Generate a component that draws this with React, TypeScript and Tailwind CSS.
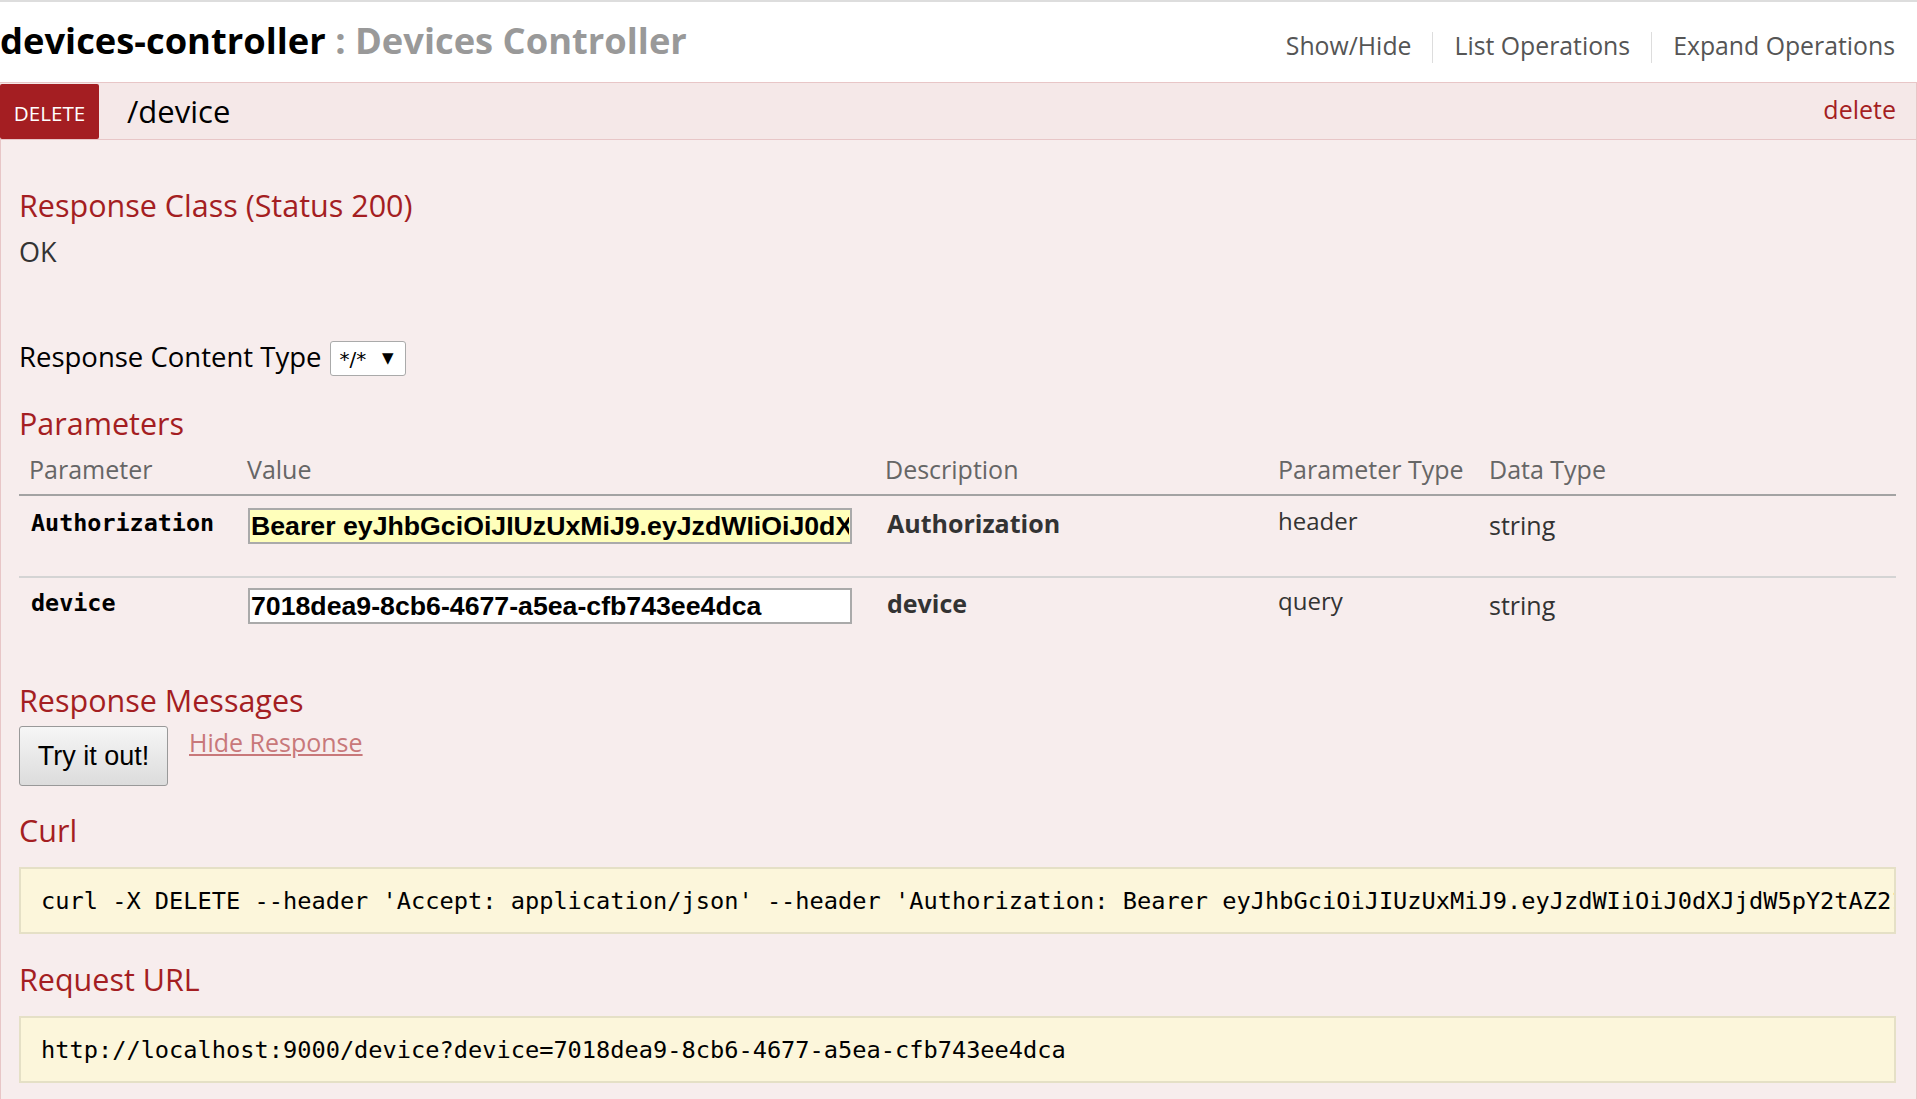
import React from "react";

const TOKEN =
  "Bearer eyJhbGciOiJIUzUxMiJ9.eyJzdWIiOiJ0dXJjdW5pY2tAZ21haWwuY29tIiwiZXhwIjoxNTI2MDAwMDAwfQ.Xk3pQm9vR2c0aWxwZ1hDZkRhT0p4b1d6";
const DEVICE = "7018dea9-8cb6-4677-a5ea-cfb743ee4dca";
const CURL = `curl -X DELETE --header 'Accept: application/json' --header 'Authorization: ${TOKEN}' 'http://localhost:9000/device?device=${DEVICE}'`;
const URL = `http://localhost:9000/device?device=${DEVICE}`;

const cols = "grid grid-cols-[218px_638px_393px_211px_1fr]";

function ParamRow({
  name,
  value,
  required,
  desc,
  ptype,
  border,
}: {
  name: string;
  value: string;
  required?: boolean;
  desc: string;
  ptype: string;
  border?: boolean;
}) {
  return (
    <div className={`${cols} h-[82px] ${border ? "border-b-2 border-[#d4d4d4]" : ""}`}>
      <div className="pl-[12px] pt-[12px] font-['DejaVu_Sans_Mono',monospace] text-[23.4px] font-bold leading-[30px] text-black">
        {name}
      </div>
      <div className="pl-[11px] pt-[12px]">
        <input
          readOnly
          value={value}
          className={`block h-[36px] w-[604px] border-2 border-[#aaaaaa] px-[1px] font-['Liberation_Sans',Arial,sans-serif] text-[26.7px] font-bold text-black outline-none ${
            required ? "bg-[#ffffbb]" : "bg-white"
          }`}
        />
      </div>
      <div className="pl-[12px] pt-[10px] text-[25px] font-bold leading-[34px] text-[#333333]">{desc}</div>
      <div className="pl-[10px] pt-[8px] text-[24px] leading-[34px] text-[#333333]">{ptype}</div>
      <div className="pl-[10px] pt-[12px] text-[25px] leading-[34px] text-[#333333]">string</div>
    </div>
  );
}

export default function App() {
  return (
    <div className="min-h-screen w-full border-t-2 border-[#dddddd] bg-white font-['Open_Sans',sans-serif]">
      {/* resource header */}
      <div className="flex h-[80px] items-start justify-between">
        <h2 className="whitespace-nowrap text-[36.3px] font-bold leading-[77px] text-black">
          devices-controller <span className="text-[#999999]">: Devices Controller</span>
        </h2>
        <div className="flex items-start gap-[21px] pr-[22px] pt-[26px] text-[24.8px] leading-[34px] text-[#555555]">
          <span>Show/Hide</span>
          <span className="mt-[4px] h-[31px] w-px bg-[#dddddd]" />
          <span>List Operations</span>
          <span className="mt-[4px] h-[31px] w-px bg-[#dddddd]" />
          <span>Expand Operations</span>
        </div>
      </div>

      {/* operation heading */}
      <div className="flex h-[58px] items-start border-y border-r border-[#e8c6c7] bg-[#f5e8e8]">
        <span className="mt-[1px] h-[55px] w-[99px] rounded-[2px] bg-[#a41e22] text-center text-[20.6px] leading-[58px] text-white">
          DELETE
        </span>
        <span className="ml-[28px] text-[31px] leading-[56px] text-black">/device</span>
        <span className="ml-auto pr-[20px] text-[25px] leading-[53px] text-[#a41e22]">delete</span>
      </div>

      {/* operation content */}
      <div className="border-x border-b border-[#e8c6c7] bg-[#f7eded] pb-[20px] pl-[18px] pr-[20px] pt-[45px]">
        <h4 className="text-[30.5px] leading-[41px] text-[#a41e22]">Response Class (Status 200)</h4>
        <div className="mt-[7px] text-[27px] leading-[37px] text-[#333333]">OK</div>

        <div className="mt-[68px] flex items-start">
          <span className="text-[27.5px] leading-[37px] text-black">Response Content Type</span>
          <div className="ml-[9px] mt-[3px] flex h-[35px] w-[76px] items-center justify-between rounded-[3px] border border-[#aaaaaa] bg-white pl-[8px] pr-[12px] font-['DejaVu_Sans',sans-serif] text-[20px] text-black">
            <span>*/*</span>
            <span className="text-[15px]">▼</span>
          </div>
        </div>

        <h4 className="mt-[27px] text-[30.5px] leading-[41px] text-[#a41e22]">Parameters</h4>

        <div className={`${cols} mt-[8px] border-b-2 border-[#a3a3a3] pb-[8px] text-[25px] leading-[34px] text-[#666666]`}>
          <div className="pl-[10px]">Parameter</div>
          <div className="pl-[10px]">Value</div>
          <div className="pl-[10px]">Description</div>
          <div className="pl-[10px]">Parameter Type</div>
          <div className="pl-[10px]">Data Type</div>
        </div>
        <ParamRow name="Authorization" value={TOKEN} required desc="Authorization" ptype="header" border />
        <div className="-mt-[2px]">
          <ParamRow name="device" value={DEVICE} desc="device" ptype="query" />
        </div>

        <h4 className="mt-[22px] text-[30.5px] leading-[41px] text-[#a41e22]">Response Messages</h4>
        <div className="mt-[5px] flex items-start gap-[21px]">
          <button className="h-[60px] w-[149px] rounded-[3px] border border-[#999999] bg-linear-to-b from-[#f6f6f6] to-[#dcdcdc] font-['Liberation_Sans',Arial,sans-serif] text-[27px] text-black">
            Try it out!
          </button>
          <span className="text-[25px] leading-[33px] text-[#c8787a] underline">Hide Response</span>
        </div>

        <h4 className="mt-[24px] text-[30.5px] leading-[41px] text-[#a41e22]">Curl</h4>
        <pre className="mt-[16px] overflow-hidden whitespace-pre border-2 border-[#e5e0c6] bg-[#fcf6db] pb-[17px] pl-[20px] pt-[18px] font-['DejaVu_Sans_Mono',monospace] text-[23.65px] leading-[28px] text-black">
          {CURL}
        </pre>

        <h4 className="mt-[25px] text-[30.5px] leading-[41px] text-[#a41e22]">Request URL</h4>
        <pre className="mt-[16px] overflow-hidden whitespace-pre border-2 border-[#e5e0c6] bg-[#fcf6db] pb-[17px] pl-[20px] pt-[18px] font-['DejaVu_Sans_Mono',monospace] text-[23.65px] leading-[28px] text-black">
          {URL}
        </pre>
      </div>
    </div>
  );
}
